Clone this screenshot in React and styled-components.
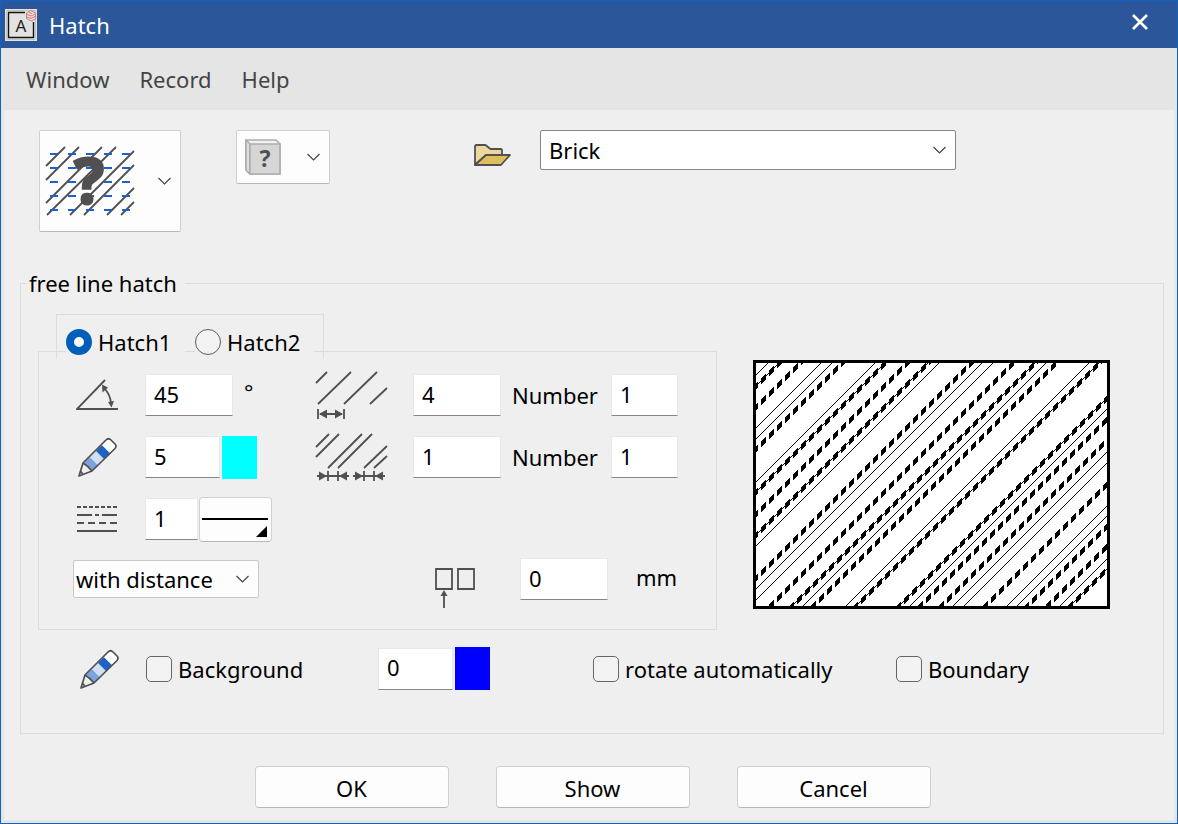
import React, { useState } from "react";
import styled, { createGlobalStyle } from "styled-components";

const ink = "#505050";

const GlobalStyle = createGlobalStyle`
  *, *::before, *::after { box-sizing: border-box; }
  body { margin: 0; background: #efefef; }
  body, button, input, select {
    font-family: "Noto Sans", "Open Sans", sans-serif;
    font-size: 22px;
    line-height: 30px;
    color: #000;
  }
`;

const Dialog = styled.div`
  min-height: 100vh;
  display: flex;
  flex-direction: column;
  background: #efefef;
  border: 1px solid #0f62c0;
`;

const TitleBar = styled.header`
  display: flex;
  align-items: center;
  height: 47px;
  padding: 0 24px 0 4px;
  background: #2b579a;
  color: #fff;
`;

const Title = styled.h1`
  flex: 1;
  margin: 0 0 0 12px;
  font-size: 22px;
  font-weight: 400;
`;

const CloseButton = styled.button`
  display: flex;
  padding: 4px 4px 10px;
  border: 0;
  background: none;
`;

const MenuBar = styled.nav`
  display: flex;
  gap: 30px;
  padding: 16px 25px;
  background: #e5e5e5;
`;

const MenuItem = styled.button`
  padding: 0;
  border: 0;
  background: none;
  color: #444;
`;

const Content = styled.main`
  flex: 1;
  padding: 20px 10px 10px 15px;
  border: 3px solid #e5e5e5;
  border-top: 0;
`;

const Toolbar = styled.div`
  display: flex;
  align-items: flex-start;
  padding: 0 208px 0 20px;
`;

const PictureButton = styled.button`
  display: flex;
  align-items: center;
  justify-content: space-between;
  width: ${(p) => p.$width}px;
  height: ${(p) => p.$height}px;
  margin-right: ${(p) => p.$after}px;
  padding: 0 8px 0 ${(p) => p.$inset}px;
  border: 1px solid #d0d0d0;
  border-bottom-color: #b8b8b8;
  border-radius: 2px;
  background: #fdfdfd;

  svg { overflow: visible; }
`;

const OpenButton = styled.button`
  display: flex;
  margin: 13px 29px 0 0;
  padding: 0;
  border: 0;
  background: none;
`;

const SelectBox = styled.div`
  display: grid;
  align-items: center;
  flex: ${(p) => (p.$width ? "none" : "1")};
  width: ${(p) => (p.$width ? `${p.$width}px` : "auto")};

  select, svg { grid-area: 1 / 1; }
  svg { justify-self: end; margin-right: 9px; pointer-events: none; }
`;

const Select = styled.select`
  appearance: none;
  width: 100%;
  height: ${(p) => (p.$strong ? 40 : 38)}px;
  padding: 0 32px 0 ${(p) => (p.$strong ? 8 : 2)}px;
  border: 1px solid ${(p) => (p.$strong ? "#868686" : "#c8c8c8")};
  border-radius: 2px;
  background: ${(p) => (p.$strong ? "#fff" : "#fdfdfd")};
`;

const Group = styled.fieldset`
  min-width: 0;
  margin: 36px 0 32px 1px;
  padding: 16px 53px 43px 17px;
  border: 1px solid #dcdcdc;
`;

const Legend = styled.legend`
  margin-left: -11px;
  padding: 0 8px 0 2px;
`;

const Columns = styled.div`
  display: grid;
  grid-template-columns: minmax(0, 679fr) minmax(0, 357fr);
  gap: 36px;
`;

const Tabs = styled.div`
  position: relative;
  display: flex;
  gap: 10px;
  width: 268px;
  margin: 0 0 -8px 18px;
  padding: 12px 9px 2px;
  border: 1px solid #dcdcdc;
  border-bottom: 0;
`;

const Choice = styled.label`
  display: flex;
  align-items: center;
  flex: ${(p) => (p.$fill ? "1" : "none")};
  gap: 6px;
  background: #efefef;
`;

const Radio = styled.input`
  appearance: none;
  flex: none;
  width: 26px;
  height: 26px;
  margin: 0;
  border: 1px solid #5c5c5c;
  border-radius: 50%;
  background: #f3f3f3;

  &:checked {
    border: 8px solid #005fb8;
    background: #fff;
  }
`;

const Check = styled.input`
  appearance: none;
  flex: none;
  width: 26px;
  height: 26px;
  margin: 0;
  border: 1px solid #666;
  border-radius: 5px;
  background: #f3f3f3;

  &:checked { background: #005fb8; }
`;

const Panel = styled.div`
  display: grid;
  grid-template-columns: 242px 1fr;
  grid-template-rows: repeat(3, 62px) 58px;
  padding: 12px 0 21px 34px;
  border: 1px solid #dcdcdc;
`;

const Cell = styled.div`
  display: flex;
  align-items: center;
  min-width: 0;
`;

const IconSlot = styled.span`
  display: flex;
  flex: none;
  width: ${(p) => p.$width}px;
  padding-left: ${(p) => p.$inset || 0}px;
`;

const Field = styled.input`
  flex: none;
  width: ${(p) => p.$width}px;
  height: 42px;
  padding: 0 8px 3px;
  border: 1px solid #e8e8e8;
  border-bottom-color: #868686;
  border-radius: 1px;
  background: #fff;
`;

const FieldLabel = styled.label`
  flex: none;
  width: 110px;
  padding-left: 11px;
`;

const Unit = styled.span`
  align-self: flex-start;
  margin: ${(p) => p.$top}px 0 0 ${(p) => p.$before}px;
`;

const Swatch = styled.button`
  flex: none;
  width: 35px;
  height: 43px;
  margin-left: 2px;
  padding: 0;
  border: 0;
  background: ${(p) => p.$color};
`;

const LineButton = styled.button`
  display: flex;
  width: 73px;
  height: 45px;
  margin-left: 1px;
  padding: 0;
  border: 1px solid #d0d0d0;
  border-bottom-color: #b8b8b8;
  border-radius: 4px;
  background: #fdfdfd;
`;

const Preview = styled.div`
  align-self: start;
  display: flex;
  margin-top: 46px;
  border: 3px solid #000;
  background: #fff;

  svg { width: 100%; height: auto; }
`;

const Options = styled.div`
  display: grid;
  grid-template-columns: 66px 232px 215px 303px 1fr;
  align-items: center;
  margin-top: 17px;
  padding-left: 42px;
  white-space: nowrap;
`;

const Footer = styled.footer`
  display: flex;
  justify-content: center;
  gap: 47px;
  padding-left: 2px;
`;

const PushButton = styled.button`
  width: 194px;
  height: 42px;
  padding: 2px 0 0;
  border: 1px solid #d0d0d0;
  border-bottom-color: #b8b8b8;
  border-radius: 4px;
  background: #fdfdfd;
`;

const Chevron = () => (
  <svg width="15" height="10" viewBox="0 0 15 10" fill="none" stroke="#444" strokeWidth="1.2">
    <path d="M1.500 2l6 6 6-6" />
  </svg>
);

const AppIcon = () => (
  <svg width="32" height="32" viewBox="0 0 32 32">
    <path fill="#e2e3e1" d="M0 0h32v32H0z" />
    <path d="M1.500 1.500h29v29h-29z" fill="none" stroke="#c4c5c3" />
    <path d="M20 3.500H3.500v25h25V13" fill="none" stroke="#111" strokeWidth="1.4" />
    <text x="16" y="23" textAnchor="middle" fontSize="17" fill="#222">A</text>
    <g fill="none" stroke="#dd7777" strokeWidth="1">
      <path d="M21.500 4l4-2.500 5 2.500v6l-4.500 2-4.500-2.500z" />
      <path d="M22 5.500l4 1.500 4-2M22 8l4 1.500 4-2M24 3.500l3 1" />
    </g>
  </svg>
);

const HatchIcon = () => (
  <svg width="88" height="68" viewBox="0 0 88 68">
    <path
      d="M0 19L19 0M0 33L33 0M0 56L56 0M1 68L70 0M24 68L88 4M38 68L88 18M61 68L88 41M75 68L88 55"
      stroke={ink}
      strokeWidth="1.8"
    />
    {[7, 21, 35, 49, 63].map((y) => (
      <path key={y} d={`M4 ${y}H84`} stroke="#1f62c6" strokeWidth="2" strokeDasharray="8 10" />
    ))}
    <text x="43" y="57" textAnchor="middle" fontSize="64" fontWeight="700" fill={ink} stroke={ink} strokeWidth="2">?</text>
  </svg>
);

const CatalogIcon = () => (
  <svg width="36" height="36" viewBox="0 0 36 36" stroke="#adadad" strokeWidth="1.6" strokeLinejoin="round">
    <path d="M1 1h30l4 4v30H5l-4-4z" fill="#f2f2f2" />
    <path d="M1 1v30l4 4V5z" fill="#dedede" />
    <path d="M5 5h30v30H5z" fill="#d6d6d6" />
    <text x="20" y="28" textAnchor="middle" fontSize="23" fontWeight="700" fill={ink} stroke="none">?</text>
  </svg>
);

const FolderIcon = () => (
  <svg width="37" height="24" viewBox="0 0 37 24" stroke={ink} strokeWidth="1.8" strokeLinejoin="round">
    <path d="M1 22V3l1-1h9.500l5 4H27l1 1v5H12z" fill="#ecd79d" />
    <path d="M1 22L12 12h24l-9 10z" fill="#dfbd5c" />
  </svg>
);

const AngleIcon = () => (
  <svg width="42" height="32" viewBox="0 0 42 32" fill="none" stroke={ink} strokeWidth="1.8">
    <path d="M29 1L1 30h41" />
    <path d="M29 10c3.500 4 5.500 9 6 14" />
    <path d="M26 5.500l6 3-5.500 5zM32 23l6-1-2.500 6.500z" fill={ink} stroke="none" />
  </svg>
);

const PencilIcon = () => (
  <svg width="40" height="40" viewBox="0 0 40 40">
    <path d="M6 26l6-6 8 8-6 6z" fill="#7ba3e0" />
    <path d="M12 20l6-6 8 8-6 6z" fill="#d2e0f5" />
    <path d="M18 14l6-6 8 8-6 6z" fill="#1f62c6" />
    <path d="M24 8l5-5q2-2 4 0l4 4q2 2 0 4l-5 5z" fill="#fff" />
    <path
      d="M1 39l4-13L28 3q2.500-2.500 5 0l4 4q2 2 0 4.500L14 34zM5 26q5 3 9 8M1 39l4-1.500L2.500 34z"
      fill="none"
      stroke={ink}
      strokeWidth="1.7"
      strokeLinejoin="round"
    />
  </svg>
);

const LineTypeIcon = () => (
  <svg width="40" height="28" viewBox="0 0 40 28" stroke={ink} strokeWidth="2">
    <path d="M0 2h40" strokeDasharray="4 2" />
    <path d="M0 10h15M18 10h4M25 10h15" />
    <path d="M0 18h40" strokeDasharray="7 4" />
    <path d="M0 26h40" />
  </svg>
);

const SpacingIcon = () => (
  <svg width="73" height="48" viewBox="0 0 73 48" fill="none" stroke={ink} strokeWidth="1.8">
    <path d="M1 12L12 1M3 33L36 1M29 33L62 1M55 33l17-16M3 38v10M29 38v10M5 43h22" />
    <path d="M4 43l8-4.500v9zM28 43l-8-4.500v9z" fill={ink} stroke="none" />
  </svg>
);

const PairSpacingIcon = () => (
  <svg width="73" height="48" viewBox="0 0 73 48" fill="none" stroke={ink} strokeWidth="1.8">
    <path d="M1 14L14 1M1 24L24 1M13 35L47 1M23 35L57 1M49 35l23-22M59 35l13-12" />
    <path d="M13 38v10M23 38v10M49 38v10M59 38v10M2 43h32M38 43h32" />
    <path d="M12 43l-8-4.500v9zM24 43l8-4.500v9zM48 43l-8-4.500v9zM60 43l8-4.500v9z" fill={ink} stroke="none" />
  </svg>
);

const OffsetIcon = () => (
  <svg width="41" height="58" viewBox="0 -18 41 58" fill="none" stroke={ink} strokeWidth="1.8">
    <path d="M1 1h16v20H1zM23 1h16v20H23zM9 25v15" />
    <path d="M9 22l3.500 6h-7z" fill={ink} stroke="none" />
  </svg>
);

// Diagonals x + y = sum. Dashed ones repeat every 8px from their phase.
const thinLines = [12, 65, 76, 119, 183, 226, 237, 290, 333, 397, 440, 451, 494, 504, 547];
const dashedLines = [
  { sum: 23, phase: 7, joined: true },
  { sum: 44, phase: 7 },
  { sum: 86, phase: 7 },
  { sum: 129, phase: 7, joined: true },
  { sum: 151, phase: 7 },
  { sum: 172, phase: 7, joined: true },
  { sum: 215, phase: 7 },
  { sum: 257, phase: 7 },
  { sum: 279, phase: 3, joined: true },
  { sum: 300, phase: 1 },
  { sum: 343, phase: 3, joined: true },
  { sum: 386, phase: 6, joined: true },
  { sum: 407, phase: 4 },
  { sum: 428, phase: 1 },
  { sum: 472, phase: 5 },
  { sum: 514, phase: 6 },
  { sum: 534, phase: 4 },
  { sum: 557, phase: 2, joined: true },
];

const previewWidth = 351;
const previewHeight = 243;

const diagonal = (sum) => `M-5 ${sum + 5}L${sum + 5} -5`;

const dashes = ({ sum, phase }) => {
  let d = "";
  for (let x = phase - 8; x < previewWidth + 8; x += 8) {
    const y = sum - x;
    if (y > -8 && y < previewHeight + 8) d += `M${x - 2} ${y - 1}l5 -4v6l-5 4z`;
  }
  return d;
};

const HatchPreview = () => (
  <svg viewBox={`0 0 ${previewWidth} ${previewHeight}`} shapeRendering="crispEdges" role="img" aria-label="Hatch preview">
    {thinLines.map((sum) => (
      <path key={sum} d={diagonal(sum)} stroke="#000" />
    ))}
    {dashedLines.map((line) => (
      <g key={line.sum}>
        {line.joined && <path d={diagonal(line.sum)} stroke="#000" />}
        <path d={dashes(line)} />
      </g>
    ))}
  </svg>
);

export default function App() {
  const [hatch, setHatch] = useState("1");

  return (
    <Dialog>
      <GlobalStyle />
      <TitleBar>
        <AppIcon />
        <Title>Hatch</Title>
        <CloseButton aria-label="Close">
          <svg width="18" height="18" viewBox="0 0 18 18" stroke="#fff" strokeWidth="2.6">
            <path d="M2 2l14 14M16 2L2 16" />
          </svg>
        </CloseButton>
      </TitleBar>
      <MenuBar>
        <MenuItem>Window</MenuItem>
        <MenuItem>Record</MenuItem>
        <MenuItem>Help</MenuItem>
      </MenuBar>
      <Content>
        <Toolbar>
          <PictureButton $width={142} $height={102} $after={55} $inset={6} aria-label="Hatch type">
            <HatchIcon />
            <Chevron />
          </PictureButton>
          <PictureButton $width={94} $height={54} $after={144} $inset={8} aria-label="Catalog">
            <CatalogIcon />
            <Chevron />
          </PictureButton>
          <OpenButton aria-label="Open">
            <FolderIcon />
          </OpenButton>
          <SelectBox>
            <Select $strong aria-label="Hatch name" defaultValue="Brick">
              <option>Brick</option>
            </Select>
            <Chevron />
          </SelectBox>
        </Toolbar>

        <Group>
          <Legend>free line hatch</Legend>
          <Columns>
            <div>
              <Tabs>
                <Choice $fill>
                  <Radio type="radio" name="hatch" checked={hatch === "1"} onChange={() => setHatch("1")} />
                  Hatch1
                </Choice>
                <Choice $fill>
                  <Radio type="radio" name="hatch" checked={hatch === "2"} onChange={() => setHatch("2")} />
                  Hatch2
                </Choice>
              </Tabs>
              <Panel>
                <Cell>
                  <IconSlot $width={72} $inset={3}><AngleIcon /></IconSlot>
                  <Field $width={88} aria-label="Angle" defaultValue="45" />
                  <Unit $top={12} $before={11}>°</Unit>
                </Cell>
                <Cell>
                  <IconSlot $width={98}><SpacingIcon /></IconSlot>
                  <Field $width={88} aria-label="Spacing" defaultValue="4" />
                  <FieldLabel htmlFor="number1">Number</FieldLabel>
                  <Field $width={67} id="number1" defaultValue="1" />
                </Cell>
                <Cell>
                  <IconSlot $width={72} $inset={5}><PencilIcon /></IconSlot>
                  <Field $width={75} aria-label="Pen" defaultValue="5" />
                  <Swatch $color="#00ffff" aria-label="Pen colour" />
                </Cell>
                <Cell>
                  <IconSlot $width={98}><PairSpacingIcon /></IconSlot>
                  <Field $width={88} aria-label="Pair spacing" defaultValue="1" />
                  <FieldLabel htmlFor="number2">Number</FieldLabel>
                  <Field $width={67} id="number2" defaultValue="1" />
                </Cell>
                <Cell>
                  <IconSlot $width={72} $inset={4}><LineTypeIcon /></IconSlot>
                  <Field $width={53} aria-label="Line type" defaultValue="1" />
                  <LineButton aria-label="Choose line type">
                    <svg width="71" height="43" viewBox="0 0 71 43">
                      <path d="M2 21h66" stroke="#000" strokeWidth="2" />
                      <path d="M67 28v11H56z" />
                    </svg>
                  </LineButton>
                </Cell>
                <Cell />
                <Cell>
                  <SelectBox $width={186}>
                    <Select aria-label="Distance mode" defaultValue="with distance">
                      <option>with distance</option>
                    </Select>
                    <Chevron />
                  </SelectBox>
                </Cell>
                <Cell>
                  <IconSlot $width={205} $inset={120}><OffsetIcon /></IconSlot>
                  <Field $width={88} aria-label="Offset in mm" defaultValue="0" />
                  <Unit $top={12} $before={28}>mm</Unit>
                </Cell>
              </Panel>
            </div>
            <Preview>
              <HatchPreview />
            </Preview>
          </Columns>
          <Options>
            <PencilIcon />
            <Choice>
              <Check type="checkbox" />
              Background
            </Choice>
            <Cell>
              <Field $width={75} aria-label="Background pen" defaultValue="0" />
              <Swatch $color="#0000ff" aria-label="Background colour" />
            </Cell>
            <Choice>
              <Check type="checkbox" />
              rotate automatically
            </Choice>
            <Choice>
              <Check type="checkbox" />
              Boundary
            </Choice>
          </Options>
        </Group>

        <Footer>
          <PushButton>OK</PushButton>
          <PushButton>Show</PushButton>
          <PushButton>Cancel</PushButton>
        </Footer>
      </Content>
    </Dialog>
  );
}
